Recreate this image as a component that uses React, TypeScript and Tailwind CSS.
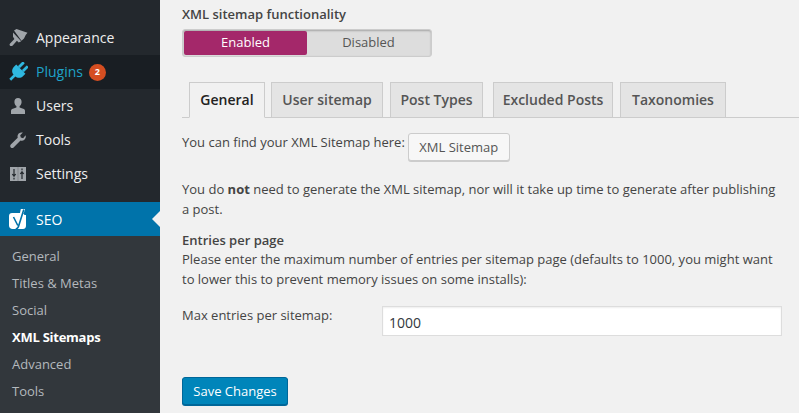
import type { ReactNode } from 'react'

const font = { fontFamily: '"Open Sans", sans-serif' }

function BrushIcon() {
  return (
    <svg width="20" height="20" viewBox="0 0 20 20" fill="#a0a5aa">
      <path d="M6 2.500 8.500 1l11 3.800-1.800 2.200-1.700 3.500-2.500 2.300z" />
      <path d="m5 4.500 8.200 8.800-2.500 1.200-1.800-1.700-4.200 4.700c-.8.800-2.200.8-2.800 0-.5-.7-.4-1.500.2-2.100l4.300-4.400-1.400-2.300z" />
    </svg>
  )
}

function PlugIcon() {
  return (
    <svg width="20" height="20" viewBox="0 0 20 20" fill="#2fb8e0">
      <g transform="rotate(45 10 10)">
        <rect x="5.800" y="-1" width="2.800" height="7" rx="0.6" />
        <rect x="11.400" y="-1" width="2.800" height="7" rx="0.6" />
        <path d="M3.500 6h13v3.500c0 3.200-2.800 5.500-5.200 5.500v6H8.700v-6c-2.400 0-5.200-2.300-5.200-5.500z" />
      </g>
    </svg>
  )
}

function UserIcon() {
  return (
    <svg width="20" height="20" viewBox="0 0 20 20" fill="#a0a5aa">
      <path d="M10 2c2.200 0 3.600 1.700 3.600 3.900 0 1.800-.9 3.500-2 4.200v1.300l4.300 1.700c.7.300 1.100.9 1.100 1.600V18H3v-3.300c0-.7.400-1.300 1.100-1.600l4.300-1.700v-1.300c-1.100-.7-2-2.400-2-4.200C6.400 3.700 7.800 2 10 2z" />
    </svg>
  )
}

function WrenchIcon() {
  return (
    <svg width="20" height="20" viewBox="0 0 20 20" fill="#a0a5aa">
      <path d="M17.600 5.300c.5 1.500.1 3.100-1 4.200-1.100 1.100-2.700 1.400-4.100 1l-6.900 6.900c-.8.800-2 .8-2.800 0-.8-.8-.8-2 0-2.800l6.900-6.900c-.4-1.400-.1-3 1-4.100 1.100-1.100 2.800-1.500 4.200-1l-2.700 2.700.6 2.300 2.300.6z" />
    </svg>
  )
}

function SettingsIcon() {
  return (
    <svg width="20" height="20" viewBox="0 0 20 20">
      <rect x="2" y="3" width="16" height="14" fill="#a0a5aa" />
      <path d="M6 5v7M4.300 10 6 12.200 7.700 10M6 13.800v1.700M14 15V8M12.300 10 14 7.800l1.700 2.200M14 4.500v1.800" stroke="#23282d" strokeWidth="1.200" fill="none" />
      <path d="M10 3v14" stroke="#7d8286" strokeWidth="0.800" />
    </svg>
  )
}

function YoastIcon() {
  return (
    <svg width="20" height="20" viewBox="0 0 20 20">
      <path d="M4 4h10l1 0 1.500 2H18v10.500c0 2-1 3.500-3 3.500H4.500C2.500 20 1 18.500 1 16.500V7c0-1.800 1.200-3 3-3z" fill="#fff" />
      <path d="M12.800 0H17l-1.200 4h-3.800z" fill="#fff" />
      <path d="M5.500 8 9.800 16.500M15.800 0.500 10.500 17.500c-.4 1.300-1.200 2-2.700 2.500" stroke="#0073aa" strokeWidth="1.600" fill="none" />
    </svg>
  )
}

function MenuRow({ icon, active, children }: { icon: ReactNode; active?: boolean; children: ReactNode }) {
  return (
    <div className={`h-[34px] flex items-center text-[14px] ${active ? 'bg-[#191e23] text-[#1fa3c9]' : 'text-[#eeeeee]'}`}>
      <div className="w-[36px] pl-[8px] shrink-0 flex">{icon}</div>
      <div className="flex items-center pb-[2px]">{children}</div>
    </div>
  )
}

function Tab({ label, active, className }: { label: string; active?: boolean; className: string }) {
  return (
    <div
      className={`h-[36px] pb-[2px] flex items-center justify-center border border-[#cccccc] text-[14px] font-semibold ${className} ${
        active ? 'bg-[#f1f1f1] border-b-[#f1f1f1] text-[#222222]' : 'bg-[#e4e4e4] text-[#555555]'
      }`}
    >
      {label}
    </div>
  )
}

const subItems = ['General', 'Titles & Metas', 'Social', 'XML Sitemaps', 'Advanced', 'Tools']

export default function App() {
  return (
    <div className="w-[799px] h-[413px] flex overflow-hidden bg-[#f1f1f1] text-[13px] text-[#444444]" style={font}>
      <aside className="w-[160px] shrink-0 bg-[#23282d] pt-[21px]">
        <MenuRow icon={<BrushIcon />}>Appearance</MenuRow>
        <MenuRow icon={<PlugIcon />} active>
          Plugins
          <span className="ml-[6px] mt-[2px] w-[17px] h-[17px] rounded-full bg-[#d54e21] text-white text-[9px] font-bold flex items-center justify-center">2</span>
        </MenuRow>
        <MenuRow icon={<UserIcon />}>Users</MenuRow>
        <MenuRow icon={<WrenchIcon />}>Tools</MenuRow>
        <MenuRow icon={<SettingsIcon />}>Settings</MenuRow>

        <div className="relative mt-[11px] h-[34px] flex items-center bg-[#0073aa] text-white text-[14px]">
          <div className="w-[36px] pl-[8px] shrink-0 flex"><YoastIcon /></div>
          SEO
          <div className="absolute right-0 top-[9px] border-y-[8px] border-y-transparent border-r-[8px] border-r-[#f1f1f1]" />
        </div>

        <div className="bg-[#32373c] pt-[7px] h-[200px]">
          {subItems.map(item => (
            <div
              key={item}
              className={`h-[27px] pl-[12px] flex items-center text-[13px] ${item === 'XML Sitemaps' ? 'font-bold text-white tracking-[-0.25px]' : 'text-[#b4b9be]'}`}
            >
              {item}
            </div>
          ))}
        </div>
      </aside>

      <main className="flex-1 min-w-0 pl-[22px] pt-[5px]">
        <div className="font-semibold leading-[18px]">XML sitemap functionality</div>

        <div className="mt-[6px] w-[250px] h-[28px] flex rounded-[3px] bg-[#dddddd] border border-[#cccccc] p-[1px] shadow-[inset_0_1px_2px_rgba(0,0,0,0.25)]">
          <div className="w-[123px] bg-[#a4286a] text-white rounded-[2px] flex items-center justify-center">Enabled</div>
          <div className="flex-1 flex items-center justify-center text-[#555555]">Disabled</div>
        </div>

        <div className="mt-[25px] h-[36px] flex pl-[7px] border-b border-[#cccccc]">
          <Tab label="General" active className="w-[76px]" />
          <Tab label="User sitemap" className="w-[112px] ml-[6px]" />
          <Tab label="Post Types" className="w-[93px] ml-[7px]" />
          <Tab label="Excluded Posts" className="w-[120px] ml-[10px]" />
          <Tab label="Taxonomies" className="w-[106px] ml-[7px]" />
        </div>

        <div className="mt-[15px] flex items-start">
          <span className="leading-[18px]">You can find your XML Sitemap here:</span>
          <button className="ml-[3px] w-[102px] h-[28px] pt-[2px] bg-[#f7f7f7] border border-[#cccccc] rounded-[3px] shadow-[0_1px_0_#cccccc] text-[#555555]">XML Sitemap</button>
        </div>

        <p className="mt-[18px] leading-[20px] w-[600px]">
          You do <strong>not</strong> need to generate the XML sitemap, nor will it take up time to generate after publishing a post.
        </p>

        <h4 className="mt-[13px] font-semibold leading-[17px]">Entries per page</h4>
        <p className="leading-[20px] w-[600px]">
          Please enter the maximum number of entries per sitemap page (defaults to 1000, you might want to lower this to prevent memory issues on some installs):
        </p>

        <div className="mt-[17px] flex items-start">
          <label className="w-[200px] leading-[18px]">Max entries per sitemap:</label>
          <div className="w-[400px] h-[30px] pt-[2px] bg-white border border-[#dddddd] flex items-center pl-[6px] text-[14px] text-[#32373c] shadow-[inset_0_1px_2px_rgba(0,0,0,0.07)]">1000</div>
        </div>

        <button className="mt-[41px] block w-[106px] h-[28px] pt-[1px] bg-[#0085ba] border border-[#006799] rounded-[3px] shadow-[0_1px_0_#006799] text-white">Save Changes</button>
      </main>
    </div>
  )
}
